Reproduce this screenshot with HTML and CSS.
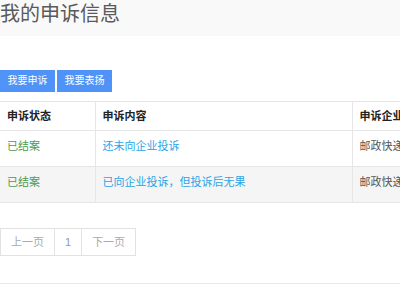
FILE: index.html
```html
<!DOCTYPE html>
<html lang="zh">
<head>
<meta charset="utf-8">
<link rel="stylesheet" href="styles.css">
</head>
<body>
<div class="page">
  <div class="header"><h1 class="title">我的申诉信息</h1></div>
  <div class="actions">
    <button class="btn">我要申诉</button>
    <button class="btn">我要表扬</button>
  </div>
  <table class="grid">
    <colgroup><col class="c1"><col class="c2"><col class="c3"></colgroup>
    <thead>
      <tr><th>申诉状态</th><th>申诉内容</th><th>申诉企业</th></tr>
    </thead>
    <tbody>
      <tr><td class="status">已结案</td><td><a class="link">还未向企业投诉</a></td><td class="corp">邮政快递</td></tr>
      <tr class="alt"><td class="status">已结案</td><td><a class="link">已向企业投诉，但投诉后无果</a></td><td class="corp">邮政快递</td></tr>
    </tbody>
  </table>
  <div class="pager">
    <span class="pg">上一页</span><span class="pg num">1</span><span class="pg">下一页</span>
  </div>
  <div class="footer-line"></div>
</div>
</body>
</html>
```
FILE: styles.css
```css
html, body { margin: 0; padding: 0; background: #fff; }
body { font-family: "Liberation Sans", "Noto Sans CJK SC", sans-serif; font-size: 11px; color: #333; overflow: hidden; }
.page { width: 400px; overflow: hidden; }
.header { background: #f9f9f9; height: 36px; }
.title { margin: 0; font-weight: normal; font-size: 20px; line-height: 28px; color: #5a5a5a; padding: 0; }
.actions { display: flex; align-items: flex-start; gap: 2px; margin-top: 34px; height: 22px; }
.btn { border: 0; background: #4f93f9; color: #fff; font-family: inherit; font-size: 10px; width: 55px; height: 22px; line-height: 22px; padding: 0; }
.grid { margin-top: 9px; border-collapse: collapse; table-layout: fixed; width: 520px; }
.c1 { width: 95px; } .c2 { width: 257px; } .c3 { width: 168px; }
.grid th, .grid td { border-top: 1px solid #e6e6e6; border-bottom: 1px solid #e6e6e6; border-right: 1px solid #e6e6e6; text-align: left; padding: 0 0 0 7px; vertical-align: top; white-space: nowrap; }
.grid th { height: 28px; line-height: 28px; font-weight: bold; color: #222; }
.grid td { height: 35px; line-height: 30px; }
.alt td { background: #f5f5f5; }
.status { color: #4d9a4d; }
.link { color: #2aa4e6; }
.corp { color: #555; }
.pager { display: flex; margin-top: 25px; }
.pg { border: 1px solid #e2e2e2; margin-left: -1px; padding: 0 10px; height: 26px; line-height: 26px; color: #aaa; }
.pg:first-child { margin-left: 0; }
.num { padding: 0 10px; color: #8a9ab8; }
.footer-line { margin-top: 27px; border-top: 1px solid #e8e8e8; }
```
